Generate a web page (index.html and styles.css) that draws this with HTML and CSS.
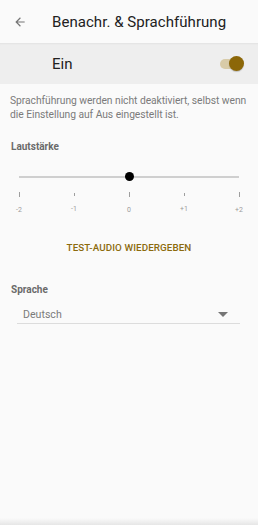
FILE: index.html
```html
<!DOCTYPE html>
<html lang="de">
<head>
<meta charset="utf-8">
<link rel="stylesheet" href="styles.css">
</head>
<body>
<div class="screen">
  <header class="toolbar">
    <svg class="back" width="14" height="14" viewBox="0 0 24 24"><path d="M20 11H7.83l5.59-5.59L12 4l-8 8 8 8 1.41-1.41L7.83 13H20v-2z" fill="#757575"/></svg>
    <h1 class="title">Benachr. &amp; Sprachführung</h1>
  </header>
  <div class="switch-row">
    <span class="switch-label">Ein</span>
    <span class="switch"><span class="track"></span><span class="thumb"></span></span>
  </div>
  <p class="desc">Sprachführung werden nicht deaktiviert, selbst wenn die Einstellung auf Aus eingestellt ist.</p>
  <h2 class="section">Lautstärke</h2>
  <div class="slider">
    <div class="rail"><span class="knob"></span></div>
    <div class="ticks">
      <div class="tick"><span class="mark tall"></span><span class="lbl">-2</span></div>
      <div class="tick"><span class="mark"></span><span class="lbl">-1</span></div>
      <div class="tick"><span class="mark tall"></span><span class="lbl">0</span></div>
      <div class="tick"><span class="mark"></span><span class="lbl">+1</span></div>
      <div class="tick"><span class="mark tall"></span><span class="lbl">+2</span></div>
    </div>
  </div>
  <div class="btn-row"><button class="test">TEST-AUDIO WIEDERGEBEN</button></div>
  <h2 class="section lang">Sprache</h2>
  <div class="select">
    <span class="value">Deutsch</span>
    <svg class="caret" width="10" height="5" viewBox="0 0 10 5"><path d="M0 0h10L5 5z" fill="#757575"/></svg>
  </div>
  <div class="spacer"></div>
  <div class="navshadow"></div>
</div>
</body>
</html>
```
FILE: styles.css
```css
* { box-sizing: border-box; }
html, body { margin: 0; padding: 0; }
body { background: #fafafa; font-family: Roboto, "Noto Sans", sans-serif; }
.screen { width: 258px; height: 525px; display: flex; flex-direction: column; background: #fafafa; overflow: hidden; }
.toolbar { height: 43px; display: flex; align-items: center; background: #fafafa; flex: none; }
.back { margin-left: 13px; margin-right: 25px; }
.title { margin: 0; font-size: 15px; font-weight: 400; color: #212121; letter-spacing: 0.05px; }
.switch-row { height: 41px; background: #eeeeee; display: flex; align-items: center; flex: none; box-shadow: inset 0 2px 2px -1px rgba(0,0,0,0.05); }
.switch-label { margin-left: 52px; font-size: 15px; color: #212121; flex: 1; }
.switch { position: relative; width: 24px; height: 16px; margin-right: 14px; }
.track { position: absolute; left: 0; top: 3px; width: 20px; height: 10px; border-radius: 5px; background: #d8cba8; }
.thumb { position: absolute; right: 0; top: 0; width: 15px; height: 15px; border-radius: 50%; background: #8c6708; box-shadow: 0 1px 1px rgba(0,0,0,0.2); }
.desc { margin: 10px 8px 0 10px; font-size: 10.3px; line-height: 14px; color: #7b7b7b; letter-spacing: -0.05px; }
.section { margin: 18px 0 0 11px; font-size: 10px; font-weight: 700; color: #6a6a6a; line-height: 14px; }
.slider { margin: 15px 16px 0 16px; }
.rail { position: relative; height: 2px; margin: 7px 3px 0 3px; background: #cfcfcf; }
.knob { position: absolute; left: 50%; top: -4px; width: 9px; height: 9px; margin-left: -4.5px; border-radius: 50%; background: #000; }
.ticks { display: flex; justify-content: space-between; margin-top: 14px; }
.tick { width: 6px; display: flex; flex-direction: column; align-items: center; }
.mark { width: 1px; height: 3px; margin-top: 1px; background: #9e9e9e; }
.mark.tall { height: 5px; margin-top: 0; }
.lbl { margin-top: 9px; font-size: 7px; color: #9a9a9a; white-space: nowrap; line-height: 8px; }
.btn-row { display: flex; justify-content: center; margin-top: 28px; }
.test { border: 0; background: none; padding: 0; font-family: inherit; font-size: 9.8px; font-weight: 500; color: #8c6a0d; letter-spacing: 0.1px; }
.section.lang { margin-top: 30px; }
.select { margin: 8px 18px 0 17px; height: 19px; border-bottom: 1px solid #dcdcdc; display: flex; align-items: center; padding-left: 6px; padding-right: 12px; }
.value { flex: 1; font-size: 10.6px; color: #7b7b7b; }
.spacer { flex: 1; }
.navshadow { height: 7px; background: linear-gradient(#fafafa, #e6e6e6); flex: none; }
```
